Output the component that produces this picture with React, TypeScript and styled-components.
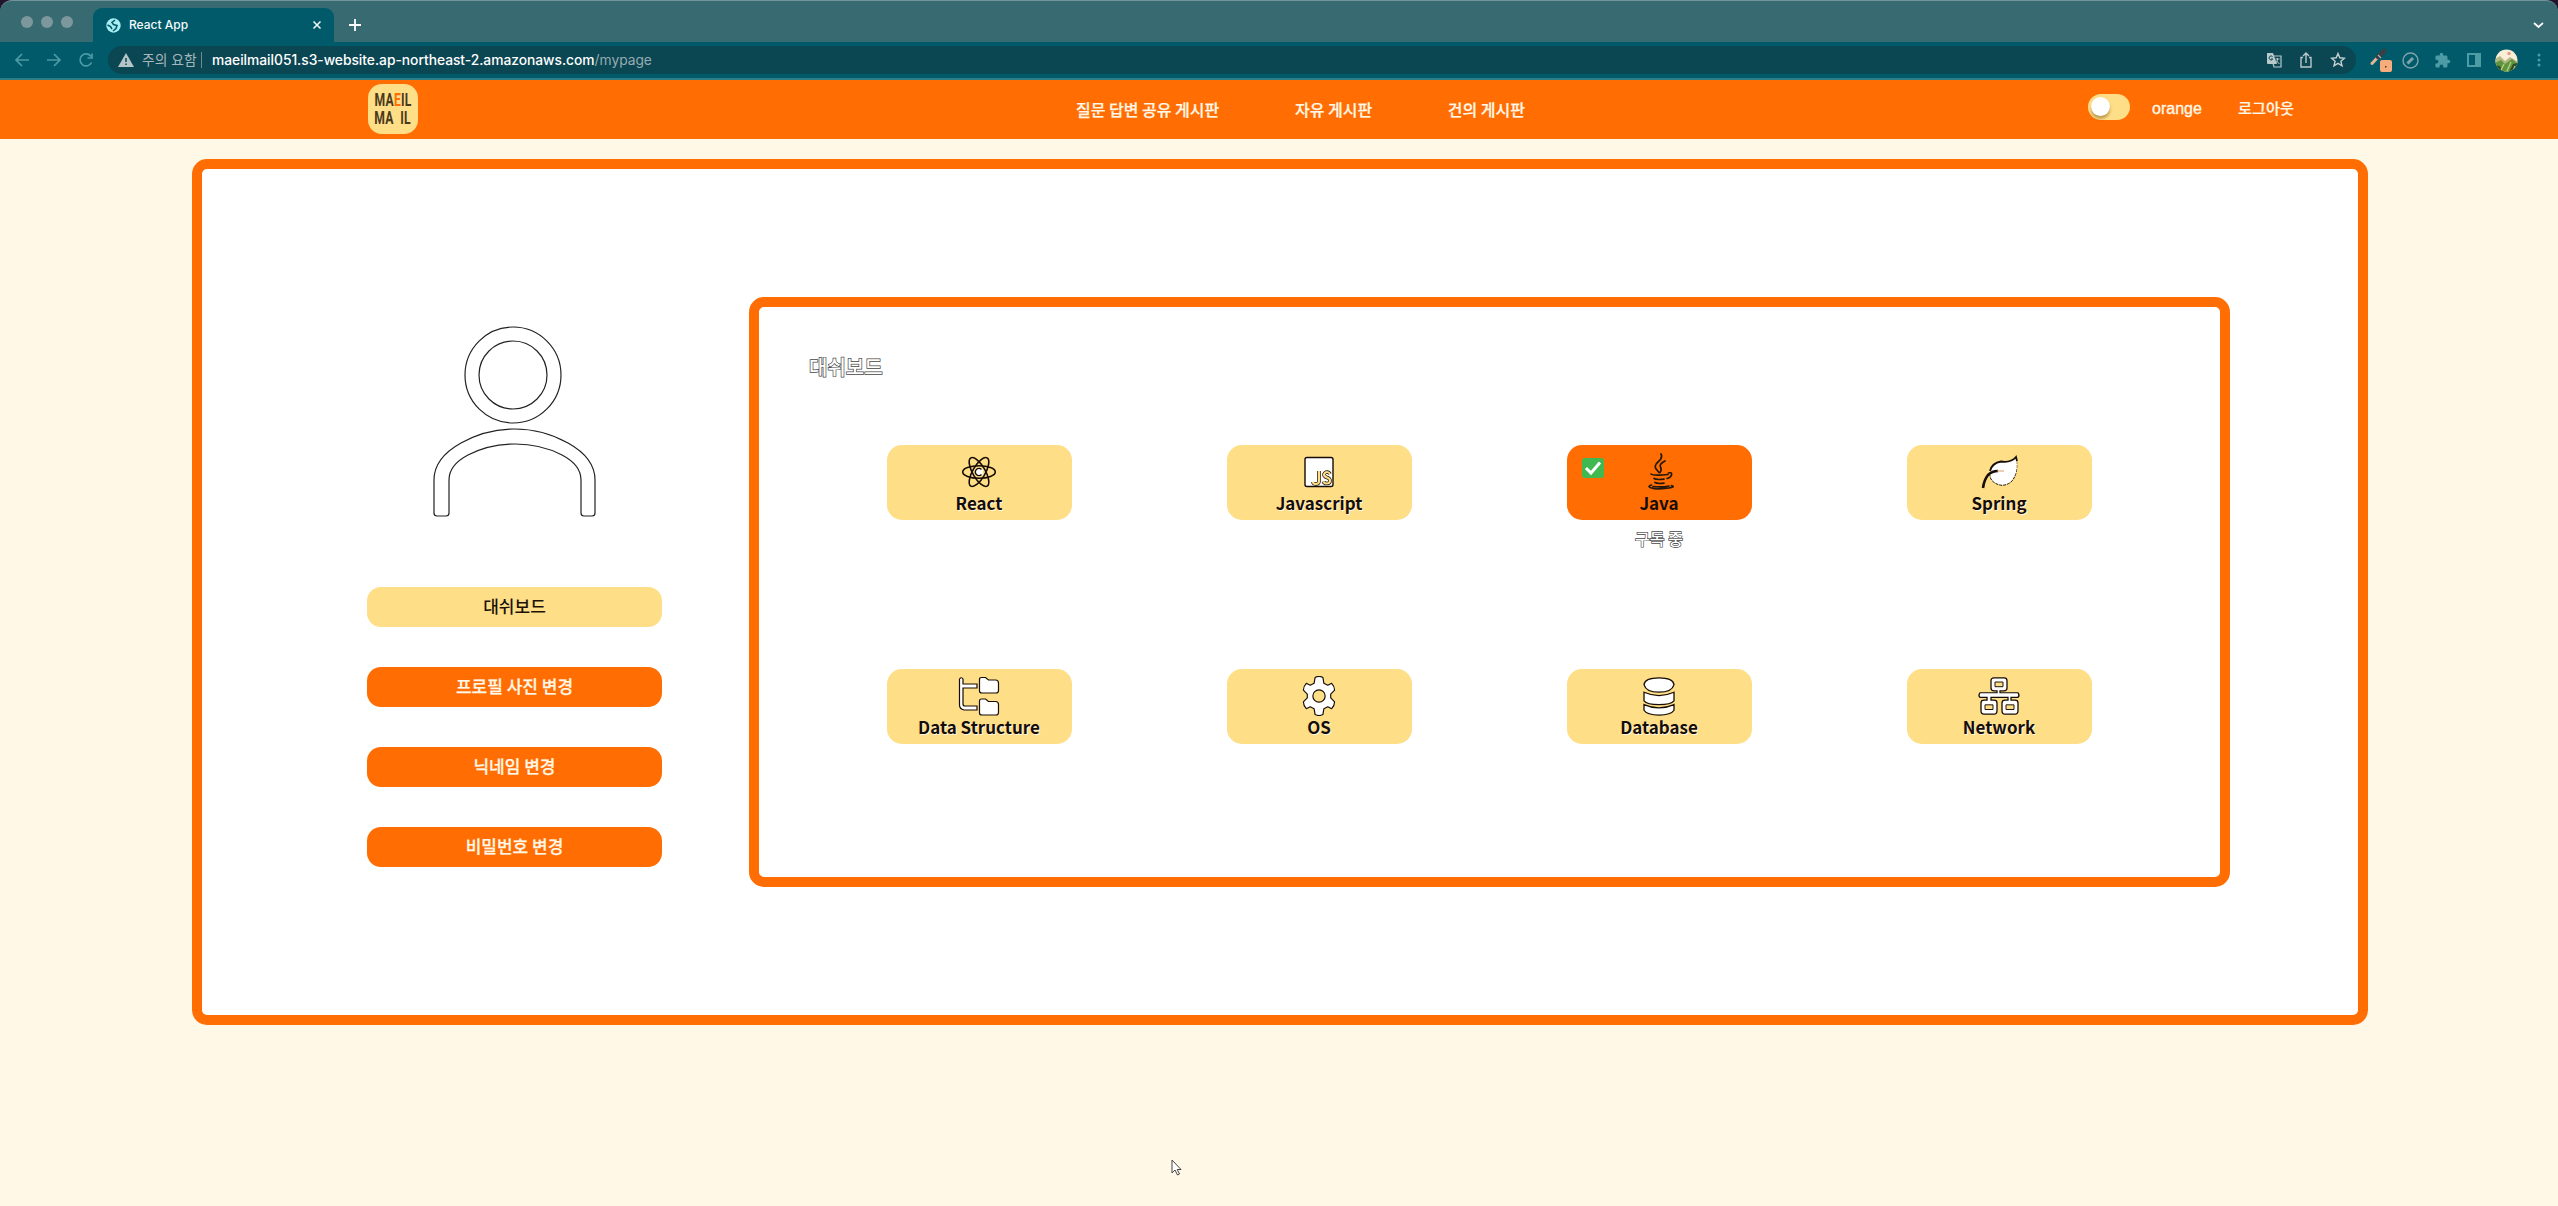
import React from 'react';
import styled, { createGlobalStyle, css } from 'styled-components';

const Global = createGlobalStyle`
  * { box-sizing: border-box; }
  html, body { margin: 0; padding: 0; }
  body { background: #fff8e6; font-family: "Noto Sans CJK KR", sans-serif; }
`;

const Window = styled.div`
  width: 2558px; height: 1206px; overflow: hidden;
  display: flex; flex-direction: column;
  background: #fff8e6;
  position: relative;
`;

/* ---------- browser frame ---------- */
const TabBar = styled.div`
  height: 42px; flex: none; display: flex; align-items: flex-end;
  background: #386a72; border-top: 1px solid #71959a;
  border-radius: 12px 12px 0 0;
  box-shadow: 0 -12px 0 12px #23142d;
`;
const Lights = styled.div`
  width: 93px; height: 41px; padding-left: 21px;
  display: flex; gap: 8px; align-items: center;
`;
const Light = styled.i`
  width: 12px; height: 12px; border-radius: 50%; background: #7c989d;
`;
const Tab = styled.div`
  width: 241px; height: 34px; border-radius: 9px 9px 0 0; background: #005a6a;
  display: flex; align-items: center; padding: 0 12px 0 13px;
  color: #f4fafa; font: 500 12px/34px Inter, sans-serif;
  svg { flex: none; }
`;
const TabTitle = styled.span`flex: 1; padding-left: 8px;`;
const NewTab = styled.div`flex: 1; height: 34px; padding: 10px 0 0 14px; svg { display: block; }`;
const TabMenu = styled.div`width: 26px; height: 34px; padding-top: 11px; svg { display: block; }`;

const Toolbar = styled.div`
  height: 38px; flex: none; display: flex; align-items: center;
  background: #005a6a; border-bottom: 2px solid #2c7d86;
`;
const NavIcons = styled.div`
  width: 108px; display: flex; gap: 14px; padding-left: 13px; align-items: center;
`;
const Address = styled.div`
  width: 2248px; height: 28px; border-radius: 14px; background: #0b4653;
  display: flex; align-items: center; padding: 0 10px 0 10px;
  color: #fff; font: 13.8px/28px Inter, "Noto Sans CJK KR", sans-serif;
`;
const Warn = styled.span`
  margin-left: 8px; height: 16px; line-height: 16px; font-size: 13.8px;
  color: #a5b8bc; border-right: 1px solid #6c8b92; margin-right: 10px; width: 60px; white-space: nowrap;
`;
const Url = styled.span`flex: 1; letter-spacing: -.02px; b { font-weight: 500; } span { color: #96acb1; }`;
const AddressIcons = styled.div`display: flex; gap: 16px; align-items: center;`;
const Extensions = styled.div`
  flex: 1; display: flex; align-items: center; padding-left: 12px;
`;
const Slot = styled.div<{ $w?: number }>`
  width: ${p => p.$w ?? 32}px; flex: none; display: flex; justify-content: center; align-items: center;
`;

/* ---------- site header ---------- */
const Header = styled.header`
  height: 59px; flex: none; background: #ff6d03;
  display: flex; align-items: center; padding-left: 368px;
  color: #fff8e6;
`;
const Logo = styled.div`
  width: 50px; height: 50px; border-radius: 14px; background: #ffde88; margin-top: -1px;
  display: flex; flex-direction: column; align-items: center; justify-content: center;
  color: #4a3a1c;
`;
const LogoLine = styled.div`
  font: 700 19px/18px Roboto, sans-serif; height: 18px; white-space: pre;
  transform: scaleX(0.64); letter-spacing: .4px;
  em { font-style: normal; color: #ff6d03; }
`;
const Menu = styled.nav`
  width: 449px; margin: -1px 0 0 658px; display: flex; justify-content: space-between;
  font-size: 16px; font-weight: 500; white-space: nowrap;
  -webkit-text-stroke: .25px currentColor;
`;
const Account = styled.div`
  margin: -5px 0 0 563px; display: flex; align-items: center; font-size: 15.2px; font-weight: 500;
`;
const Toggle = styled.div`
  width: 42px; height: 26px; border-radius: 13px; background: #ffde88; padding: 3px;
`;
const Knob = styled.div`
  width: 19px; height: 19px; border-radius: 50%; background: #fff;
  box-shadow: 0 3px 3px rgba(90, 60, 0, .4);
`;
const User = styled.span`
  margin: 3px 0 0 22px; width: 86px; font: 16px "Liberation Sans", sans-serif;
  -webkit-text-stroke: .35px currentColor;
`;
const Logout = styled.span`margin-top: -1px; -webkit-text-stroke: .2px currentColor;`;

/* ---------- my page ---------- */
const frame = css`
  background: #fff; border: 10px solid #ff6d03; border-radius: 15px;
`;
const Page = styled.main`
  ${frame}
  width: 2176px; height: 866px; margin: 20px 0 0 192px; flex: none;
  padding: 128px 0 0 165px; display: flex; align-items: flex-start;
`;
const Side = styled.aside`
  width: 295px; margin-right: 87px; padding-top: 25px; display: flex; flex-direction: column; align-items: center;
`;
const Avatar = styled.svg`width: 170px; height: 200px; margin: 0 3px 65px 0;`;
const SideButton = styled.button<{ $active?: boolean }>`
  width: 295px; height: 40px; margin: 0 0 40px; padding: 0 0 2px; border: 0; border-radius: 14px;
  font: 500 17px/38px "Noto Sans CJK KR", sans-serif;
  background: ${p => (p.$active ? '#ffde88' : '#ff6d03')};
  color: ${p => (p.$active ? '#1c1207' : '#fff8e6')};
  -webkit-text-stroke: ${p => (p.$active ? '0' : '.25px')} currentColor;
`;
const Board = styled.section`
  ${frame}
  width: 1481px; height: 590px; padding: 45px 50px 0;
`;
const outlined = css`
  color: #fff; -webkit-text-stroke: 1.4px #444; paint-order: stroke fill;
`;
const Title = styled.h2`
  ${outlined}
  margin: 0; height: 30px; font-size: 20px; line-height: 30px; font-weight: 500;
`;
const Grid = styled.div`
  margin-top: 63px; display: grid; grid-template-columns: repeat(4, 340px); grid-auto-rows: 224px;
  justify-items: center;
`;
const Cell = styled.div`display: flex; flex-direction: column; align-items: center;`;
const Card = styled.div<{ $on?: boolean }>`
  position: relative;
  width: 185px; height: 75px; border-radius: 15px; background: ${p => (p.$on ? '#ff6d03' : '#ffde88')};
  display: flex; flex-direction: column; align-items: center; padding-top: 8px;
  color: #160d06; font-size: 17px; line-height: 24px; font-weight: 700;
`;
const IconSlot = styled.div`
  height: 38px; flex: none; display: flex; align-items: center; justify-content: center;
  svg { flex: none; }
`;
const Label = styled.span<{ $on?: boolean }>`
  white-space: nowrap;
  text-shadow: ${p => (p.$on ? 'none' : '1px 1px 0 rgba(255,255,255,.8)')};
`;
const Check = styled.svg`position: absolute; left: 15px; top: 13px;`;
const Status = styled.div`
  ${outlined}
  margin-top: 6px; font-size: 16px; line-height: 24px; font-weight: 500; -webkit-text-stroke-width: 1.3px;
`;
const Cursor = styled.svg`position: absolute; left: 1170px; top: 1158px;`;

const ink = '#160d06';

const icons: Record<string, React.ReactNode> = {
  React: (
    <svg width="36" height="36" viewBox="-18 -18 36 36" fill="none" stroke={ink} strokeWidth="1.6">
      {[0, 60, 120].map(a => <ellipse key={a} rx="16.3" ry="6.3" transform={`rotate(${a})`} />)}
      <circle r="4" fill="#fff" stroke="none" />
      <path d="M2.5-2.5A3.6 3.6 0 1 0 2.5 2.5" strokeWidth="1.4" />
    </svg>
  ),
  Javascript: (
    <svg width="36" height="36" viewBox="0 0 36 36">
      <rect x="4" y="3.500" width="28" height="29" rx="2" fill="#fff" stroke={ink} strokeWidth="1.4" />
      <path d="M18 17v10q0 3-3 3t-3-2M29 20q-1-2-3-2t-3 2.500q0 2 3 3t3 3q0 3-3 3t-3.500-2" fill="none" stroke={ink} strokeWidth="3.600" />
      <path d="M18 17v10q0 3-3 3t-3-2M29 20q-1-2-3-2t-3 2.500q0 2 3 3t3 3q0 3-3 3t-3.500-2" fill="none" stroke="#ffde88" strokeWidth="2.200" />
    </svg>
  ),
  Java: (
    <svg width="36" height="38" viewBox="0 0 36 38" fill="none" stroke="#24180c" strokeWidth="1.700" strokeLinecap="round">
      <path d="M20 1q2 4-3 8t-1 8l2 2.500M24 8q-6 3-4.500 6t-.5 5.500" />
      <path d="M10 21q2 2 17 .5M27.500 20q4-1 3 2t-4.500 3.500M13 25.500q2 1.500 10 .7M14 29.500q2 1.500 9 .7" />
      <path d="M10.500 32q-5 1.500 0 3t15 .2 5-2.500M12 33.500q8 1 16-.5" />
    </svg>
  ),
  Spring: (
    <svg width="40" height="36" viewBox="0 0 40 36">
      <path d="M37 3q3 17-5 25-8 6-16 1-5-3-5-8" fill="#fff" stroke={ink} strokeWidth="1" strokeDasharray="3 1" />
      <path d="M11 16q2-7 10-8.500Q32 8 37 3q2 10-1 18L12 22Z" fill="#fff" />
      <path d="M11 17q2-8 11-9.500Q32 9 37 3l1 4" fill="none" stroke={ink} strokeWidth="1.800" />
      <path d="M19 17q-6 0-10 4-4 5-5 13" fill="none" stroke={ink} strokeWidth="2.600" />
      <path d="M25 17h-7" stroke="#d99a62" />
    </svg>
  ),
  'Data Structure': (
    <svg width="44" height="40" viewBox="0 0 44 40" fill="#fff" stroke={ink} strokeWidth="1.200">
      <path d="M2.500 3q2-2.500 3.500 0v5h14v4H6v16q0 2 2 2h12v4H7q-4.500-1-4.500-5z" />
      <path d="M22.500 3.500q0-2 2-2h4l3 2.500h7q3 0 3 3V14.500q0 2.500-2.500 2.500H25q-2.500 0-2.500-2zM22.500 25q0-2 2-2h4l3 2.500h7q3 0 3 3V36.500q0 2.500-2.500 2.500H25q-2.500 0-2.500-2z" />
    </svg>
  ),
  OS: (
    <svg width="36" height="40" viewBox="-18 -20.500 36 41" fill="#fff" stroke={ink} strokeWidth="1.200" strokeLinejoin="round">
      <path d="M-4-19Q0-21 4-19L5-13 9-11 13-13Q16-10 16-6L12-2V2L16 6Q16 10 13 13L9 11 5 13 4 19Q0 21-4 19L-5 13-9 11-13 13Q-16 10-16 6L-12 2V-2L-16-6Q-16-10-13-13L-9-11-5-13Z" />
      <circle r="6.300" fill="#ffde88" />
    </svg>
  ),
  Database: (
    <svg width="34" height="40" viewBox="0 0 34 42" preserveAspectRatio="none" fill="#fff" stroke={ink} strokeWidth="1.300">
      <path d="M2 30q15 7 30 0v6q-3 5-15 5T2 36z" />
      <path d="M2 17q15 7 30 0v9q-3 4-15 4T2 26z" />
      <path d="M2 9q1-7 15-7t15 7q-2 8-15 8T2 9z" />
    </svg>
  ),
  Network: (
    <svg width="44" height="40" viewBox="0 0 44 43" preserveAspectRatio="none" fill="#fff" stroke={ink} strokeWidth="1.300">
      <path d="M17 2h10q3 0 3 3v8q0 3-3 3h-4v2h18q2 3 0 5h-7v3h4q3 0 3 3v8q0 4-3 4H28q-3 0-3-4v-8q0-3 3-3h3v-3H14v3h3q3 0 3 3v8q0 4-3 4H7q-3 0-3-4v-8q0-3 3-3h3v-3H3q-2-2 0-5h17v-2h-3q-3 0-3-3V5q0-3 3-3z" />
      <path d="M18 6.500h8v5h-8zM8 31h8v5H8zM29 31h8v5h-8z" fill="#ffde88" strokeWidth="1" />
    </svg>
  ),
};

const topics = ['React', 'Javascript', 'Java', 'Spring', 'Data Structure', 'OS', 'Database', 'Network'];

const stroke = { fill: 'none', strokeWidth: 1.7 } as const;

export default function App() {
  return (
    <>
      <Global />
      <Window>
        <TabBar>
          <Lights><Light /><Light /><Light /></Lights>
          <Tab>
            <svg width="15" height="15" viewBox="0 0 15 15">
              <circle cx="7.500" cy="7.500" r="7.200" fill="#a6eef2" />
              <path d="M9 2L6 4.500l1.500 2 3.500 1-1 3-3 2.500M1.500 7l3 1.500L6 11" fill="none" stroke="#005a6a" strokeWidth="1.600" />
            </svg>
            <TabTitle>React App</TabTitle>
            <svg width="10" height="10" viewBox="0 0 10 10" stroke="#f4fafa" strokeWidth="1.500"><path d="M1.500 1.500l7 7m0-7l-7 7" /></svg>
          </Tab>
          <NewTab>
            <svg width="14" height="14" viewBox="0 0 14 14" stroke="#fff" strokeWidth="1.800"><path d="M7 1v12M1 7h12" /></svg>
          </NewTab>
          <TabMenu>
            <svg width="12" height="12" viewBox="0 0 12 12" {...stroke} stroke="#fff"><path d="M2 4l4.500 4L11 4" /></svg>
          </TabMenu>
        </TabBar>
        <Toolbar>
          <NavIcons>
            <svg width="18" height="18" viewBox="0 0 18 18" {...stroke} stroke="#4c9ba5"><path d="M16 9H3M9 3L3 9l6 6" /></svg>
            <svg width="18" height="18" viewBox="0 0 18 18" {...stroke} stroke="#4c9ba5"><path d="M2 9h13M9 3l6 6-6 6" /></svg>
            <svg width="18" height="18" viewBox="0 0 18 18" {...stroke} stroke="#4c9ba5"><path d="M14.500 11.500A6 6 0 1 1 14 5.500M15 2.500v4.500h-4.500" /></svg>
          </NavIcons>
          <Address>
            <svg width="16" height="14" viewBox="0 0 16 14"><path d="M8 0l8 14H0z" fill="#b4c4c7" /><path d="M8 5v4M8 10.500V12" stroke="#0b4653" strokeWidth="1.500" /></svg>
            <Warn>주의 요함</Warn>
            <Url><b>maeilmail051.s3-website.ap-northeast-2.amazonaws.com</b><span>/mypage</span></Url>
            <AddressIcons>
              <svg width="16" height="16" viewBox="0 0 16 16">
                <path d="M5 4h10v11H8z" fill="none" stroke="#b9c8ca" strokeWidth="1.200" />
                <path d="M1 1h6l4 11H2q-1 0-1-1z" fill="#b9c8ca" />
                <path d="M6.500 4.500a2 2 0 1 0 .3 2.500H5" fill="none" stroke="#0b4653" />
                <path d="M9.500 7h4M11.500 6v1q0 3-2 4m1-2l3 3" fill="none" stroke="#b9c8ca" />
              </svg>
              <svg width="16" height="16" viewBox="0 0 16 16" {...stroke} strokeWidth={1.4} stroke="#b9c8ca"><path d="M5 5.500H3V15h10V5.500h-2M8 11V1.500M5 4l3-3 3 3" /></svg>
              <svg width="16" height="16" viewBox="0 0 16 16" {...stroke} strokeWidth={1.4} stroke="#c4d0d2"><path d="M8 1.500l1.800 4.300 4.700.4-3.600 3 1.100 4.600L8 11.400l-4 2.400 1.100-4.600-3.600-3 4.700-.4z" /></svg>
            </AddressIcons>
          </Address>
          <Extensions>
            <Slot $w={26}>
              <svg width="23" height="24" viewBox="0 0 23 24">
                <path d="M2 15.500L9 8" stroke="#e2b597" strokeWidth="3" strokeLinecap="round" />
                <path d="M8 9l6-6" stroke="#3b3f42" strokeWidth="4.500" strokeLinecap="round" />
                <path d="M8 7l3 3" stroke="#a9b4b8" strokeWidth="1.200" />
                <rect x="10" y="12" width="12" height="12" rx="2" fill="#f7ad7b" /><path d="M15 18h1.500v1.500H15z" fill="#553020" />
              </svg>
            </Slot>
            <Slot>
              <svg width="17" height="17" viewBox="0 0 17 17" fill="none" stroke="#7fa4ab"><circle cx="8.500" cy="8.500" r="7.500" strokeWidth="1.400" /><path d="M5.500 11.500l5.500-5.500" strokeWidth="3" /></svg>
            </Slot>
            <Slot>
              <svg width="17" height="17" viewBox="0 0 24 24"><path d="M20.500 11H19V7c0-1.100-.9-2-2-2h-4V3.500a2.500 2.500 0 0 0-5 0V5H4c-1.100 0-2 .9-2 2v3.800h1.500a2.700 2.700 0 0 1 0 5.400H2V20c0 1.100.9 2 2 2h3.800v-1.500a2.700 2.700 0 0 1 5.400 0V22H17c1.100 0 2-.9 2-2v-4h1.500a2.500 2.500 0 0 0 0-5z" fill="#4c9ba5" /></svg>
            </Slot>
            <Slot>
              <svg width="14" height="14" viewBox="0 0 14 14"><path d="M0 0h14v14H0zM2 2v10h6V2z" fill="#4c9ba5" fillRule="evenodd" /></svg>
            </Slot>
            <Slot $w={33}>
              <svg width="23" height="23" viewBox="0 0 23 23">
                <clipPath id="face"><circle cx="11.500" cy="11.500" r="11" /></clipPath>
                <g clipPath="url(#face)">
                  <path d="M0 0h23v23H0z" fill="#fbeed8" /><circle cx="14" cy="4.500" r="1.700" fill="#e0a083" />
                  <path d="M0 10l5-3 5 5 5-4 8 5v10H0z" fill="#b3b780" /><path d="M0 14l6-3 4 4 7-5 6 5v8H0z" fill="#5f9440" />
                  <path d="M0 16l5 1 3 6H0zM14 23l4-8 5-1v9z" fill="#2c4a26" /><path d="M6 21l3-6m3 7l4-9m2 9l2-5" stroke="#bad17b" strokeWidth="1.300" />
                </g>
              </svg>
            </Slot>
            <Slot>
              <svg width="4" height="14" viewBox="0 0 4 14" fill="#4c9ba5"><circle cx="2" cy="2" r="1.500" /><circle cx="2" cy="7" r="1.500" /><circle cx="2" cy="12" r="1.500" /></svg>
            </Slot>
          </Extensions>
        </Toolbar>

        <Header>
          <Logo>
            <LogoLine>MA<em>E</em>IL</LogoLine>
            <LogoLine>MA  IL</LogoLine>
          </Logo>
          <Menu><span>질문 답변 공유 게시판</span><span>자유 게시판</span><span>건의 게시판</span></Menu>
          <Account>
            <Toggle><Knob /></Toggle>
            <User>orange</User>
            <Logout>로그아웃</Logout>
          </Account>
        </Header>

        <Page>
          <Side>
            <Avatar viewBox="428 322 170 200" fill="none" stroke="#222" strokeWidth="1.200">
              <circle cx="513" cy="375" r="48" />
              <circle cx="513" cy="375" r="34" />
              <path d="M434 514V480Q434 458 461 443Q486 429 514.500 429Q543 429 568 443Q595 458 595 480V513Q595 516 592 516H584Q581 516 581 513V480Q581 465 562 455Q541 444 515 444Q489 444 468 455Q449 465 449 480V513Q449 516 446 516H437Q434 516 434 513" />
            </Avatar>
            <SideButton $active>대쉬보드</SideButton>
            <SideButton>프로필 사진 변경</SideButton>
            <SideButton>닉네임 변경</SideButton>
            <SideButton>비밀번호 변경</SideButton>
          </Side>
          <Board>
            <Title>대쉬보드</Title>
            <Grid>
              {topics.map(name => {
                const on = name === 'Java';
                return (
                  <Cell key={name}>
                    <Card $on={on}>
                      {on && (
                        <Check width="22" height="20" viewBox="0 0 22 20">
                          <rect width="22" height="20" rx="3" fill="#3fb950" />
                          <path d="M4 10l5 5L18 4.500" fill="none" stroke="#fff" strokeWidth="3" />
                        </Check>
                      )}
                      <IconSlot>{icons[name]}</IconSlot>
                      <Label $on={on}>{name}</Label>
                    </Card>
                    {on && <Status>구독 중</Status>}
                  </Cell>
                );
              })}
            </Grid>
          </Board>
        </Page>
        <Cursor width="14" height="20" viewBox="0 0 14 20"><path d="M2 2v13l3-3 2.500 5 2-1-2.300-4.500H11z" fill="#fff" stroke="#444" /></Cursor>
      </Window>
    </>
  );
}
